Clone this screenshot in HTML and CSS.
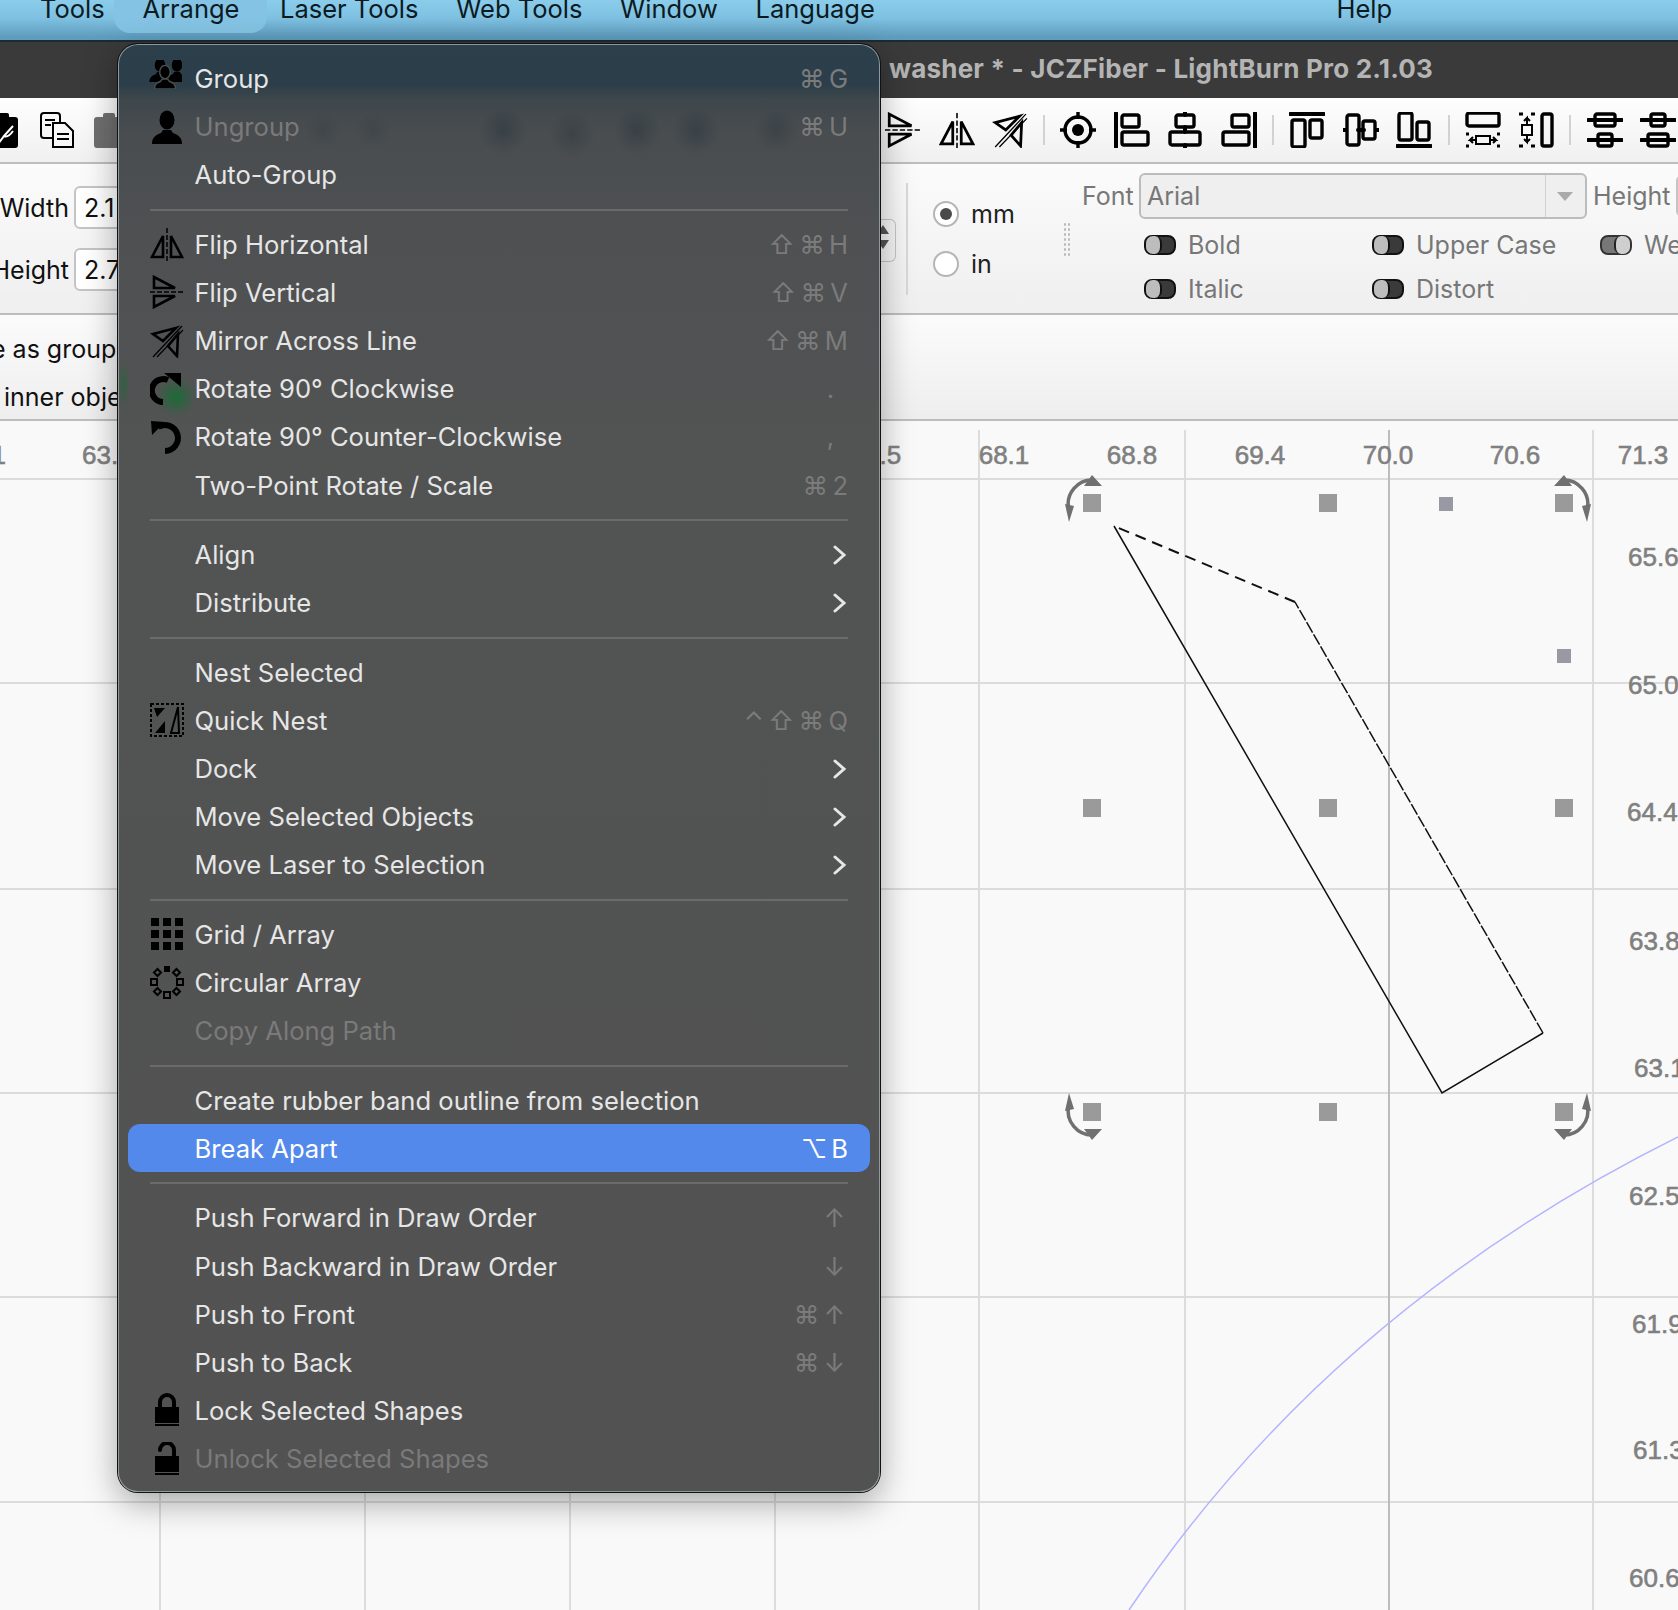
FILE: index.html
```html
<!DOCTYPE html>
<html lang="en">
<head>
    <meta charset="UTF-8">
    <title>washer * - JCZFiber - LightBurn Pro 2.1.03</title>
    <link rel="stylesheet" href="styles.css">
</head>
<body>
    <!-- shared icons -->
    <svg class="defs" width="0" height="0">
        <symbol id="person" viewBox="0 0 34 34"><ellipse cx="17" cy="10" rx="7.5" ry="9.5"/><path d="M2 34c0-7 4-9 9-11l2-3h8l2 3c5 2 9 4 9 11z"/></symbol>
        <symbol id="flip" viewBox="0 0 34 34"><path class="ln-flip" d="M13 9v21H2zM21 9v21h11z"/><path class="ln-dash" d="M17 1v33"/></symbol>
        <symbol id="mirror" viewBox="0 0 34 34"><path class="ln-flip" d="M3 10l23-6-13 13zM28 10l-1 22-9-10z"/><path class="ln1" d="M3 33L32 2M7 33L33 6"/></symbol>
        <symbol id="chev" viewBox="0 0 14 20"><path class="chev-line" d="M2 2l9 8-9 8"/></symbol>
        <symbol id="t-left" viewBox="0 0 36 36"><path class="ln4" d="M2 1v34"/><rect class="ln3" x="8" y="3" width="17" height="12" rx="2"/><rect class="ln3" x="8" y="20" width="26" height="13" rx="2"/></symbol>
        <symbol id="t-center" viewBox="0 0 36 36"><path class="ln4" d="M18 0v3M18 15v5M18 33v3"/><rect class="ln3" x="9" y="3" width="18" height="12" rx="2"/><rect class="ln3" x="3" y="20" width="30" height="13" rx="2"/></symbol>
        <symbol id="t-top" viewBox="0 0 36 36"><path class="ln4" d="M1 2h34"/><rect class="ln3" x="3" y="8" width="13" height="27" rx="2"/><rect class="ln3" x="21" y="8" width="12" height="18" rx="2"/></symbol>
        <symbol id="t-mid" viewBox="0 0 36 36"><path class="ln4" d="M0 18h3M15 18h6M33 18h3"/><rect class="ln3" x="4" y="3" width="12" height="30" rx="2"/><rect class="ln3" x="20" y="9" width="12" height="18" rx="2"/></symbol>
        <symbol id="t-stack" viewBox="0 0 36 36"><path class="ln4" d="M1 8h34M1 28h34"/><rect class="ln3" x="8" y="2" width="20" height="12" rx="2"/><rect class="ln3" x="11" y="22" width="14" height="12" rx="2"/></symbol>
    </svg>

    <div class="menubar">
        <span class="mb-item mb-tools">Tools</span>
        <span class="mb-item mb-active">Arrange</span>
        <span class="mb-item">Laser Tools</span>
        <span class="mb-item">Web Tools</span>
        <span class="mb-item">Window</span>
        <span class="mb-item">Language</span>
        <span class="mb-item mb-help">Help</span>
    </div>

    <div class="titlebar">washer * - JCZFiber - LightBurn Pro 2.1.03</div>

    <div class="toolbar">
        <div class="tb-group tb-left">
            <svg class="tb-icon" viewBox="0 0 36 36"><rect x="2" y="5" width="30" height="31" rx="3"/><rect x="11" y="1" width="12" height="8" rx="2"/><path class="ln-w" d="M27 14L18 24Q22 26 27 19M18 24L12 32"/><circle class="ln-w" cx="9" cy="30" r="3"/></svg>
            <svg class="tb-icon" viewBox="0 0 36 36"><rect class="ln2" x="2" y="1" width="19" height="25" rx="3"/><path class="ln2 fill-w" d="M14 11h12l8 8v16H14z"/><path class="ln2" d="M18 22h12M18 27h12M6 8h10M6 13h6"/></svg>
            <svg class="tb-icon tb-dim" viewBox="0 0 36 36"><rect x="2" y="5" width="30" height="31" rx="3"/><rect x="11" y="1" width="12" height="8" rx="2"/></svg>
        </div>
        <div class="tb-group tb-right">
            <svg class="tb-icon flip-v"><use href="#flip"/></svg>
            <svg class="tb-icon"><use href="#flip"/></svg>
            <svg class="tb-icon"><use href="#mirror"/></svg>
            <i class="tb-sep"></i>
            <svg class="tb-icon" viewBox="0 0 36 36"><circle class="ln3" cx="18" cy="18" r="13"/><circle cx="18" cy="18" r="6"/><path class="ln3" d="M18 0v7M18 29v7M0 18h7M29 18h7"/></svg>
            <svg class="tb-icon"><use href="#t-left"/></svg>
            <svg class="tb-icon"><use href="#t-center"/></svg>
            <svg class="tb-icon flip-h"><use href="#t-left"/></svg>
            <i class="tb-sep"></i>
            <svg class="tb-icon"><use href="#t-top"/></svg>
            <svg class="tb-icon"><use href="#t-mid"/></svg>
            <svg class="tb-icon flip-y"><use href="#t-top"/></svg>
            <i class="tb-sep"></i>
            <svg class="tb-icon" viewBox="0 0 36 36"><rect class="ln3" x="2" y="1" width="32" height="13" rx="2"/><path class="dots" d="M1 22h3M32 22h3M1 34h3M32 34h3"/><rect class="ln2" x="11" y="24" width="14" height="8"/><path class="ln2" d="M10 28H5l3-3M5 28l3 3M26 28h5l-3-3M31 28l-3 3"/></svg>
            <svg class="tb-icon" viewBox="0 0 36 36"><rect class="ln3" x="24" y="2" width="10" height="32" rx="2"/><path class="dots" d="M1 2h4M13 2h4M1 34h4M13 34h4"/><rect class="ln2" x="4" y="13" width="10" height="10"/><path class="ln2" d="M9 12V6L6 9M9 6l3 3M9 24v6l-3-3M9 30l3-3"/></svg>
            <i class="tb-sep"></i>
            <svg class="tb-icon"><use href="#t-stack"/></svg>
            <svg class="tb-icon flip-y"><use href="#t-stack"/></svg>
        </div>
    </div>

    <div class="props">
        <div class="size-col">
            <div class="size-row"><span class="size-label">Width</span><span class="size-input">2.1</span></div>
            <div class="size-row"><span class="size-label">Height</span><span class="size-input">2.7</span></div>
        </div>
        <div class="spinner"><i class="sp-up"></i><i class="sp-down"></i></div>
        <div class="units">
            <label class="radio-row"><i class="radio radio-on"></i>mm</label>
            <label class="radio-row"><i class="radio"></i>in</label>
        </div>
        <div class="grip"></div>
        <div class="font-block">
            <div class="font-row">
                <span class="font-label">Font</span>
                <div class="combo"><span class="combo-text">Arial</span><span class="combo-arrow"></span></div>
                <span class="font-height">Height</span>
                <span class="height-input"></span>
            </div>
            <div class="toggles">
                <span class="toggle-item"><i class="toggle"></i>Bold</span>
                <span class="toggle-item"><i class="toggle"></i>Upper Case</span>
                <span class="toggle-item"><i class="toggle toggle-on"></i>We</span>
                <span class="toggle-item"><i class="toggle"></i>Italic</span>
                <span class="toggle-item"><i class="toggle"></i>Distort</span>
            </div>
        </div>
    </div>

    <div class="options">
        <div class="opt-line opt-group">e as group</div>
        <div class="opt-line opt-inner">inner obje</div>
    </div>

    <!-- canvas, coordinates in page pixels -->
    <svg class="canvas" viewBox="0 421 1678 1189">
        <defs>
            <g id="rot">
                <path class="rot-arc" d="M2 -23A24 24 0 0 0 -23 7"/>
                <path class="rot-head" d="M0 -28L10 -17H-8zM-27 1L-18 3L-23 19z"/>
            </g>
        </defs>
        <path class="grid" d="M0 479H1678M0 683H1678M0 889H1678M0 1093H1678M0 1297H1678M0 1502H1678M160 430V1610M365 430V1610M570 430V1610M775 430V1610M979 430V1610M1185 430V1610M1593 430V1610"/>
        <path class="grid-dark" d="M1389 430V1610"/>

        <text class="rule" text-anchor="end" x="6" y="464">1</text>
        <text class="rule" x="82" y="464">63.7</text>
        <text class="rule" text-anchor="middle" x="876" y="464">67.5</text>
        <text class="rule" text-anchor="middle" x="1004" y="464">68.1</text>
        <text class="rule" text-anchor="middle" x="1132" y="464">68.8</text>
        <text class="rule" text-anchor="middle" x="1260" y="464">69.4</text>
        <text class="rule" text-anchor="middle" x="1388" y="464">70.0</text>
        <text class="rule" text-anchor="middle" x="1515" y="464">70.6</text>
        <text class="rule" text-anchor="middle" x="1643" y="464">71.3</text>
        <text class="rule" x="1628" y="566">65.6</text>
        <text class="rule" x="1628" y="694">65.0</text>
        <text class="rule" x="1627" y="821">64.4</text>
        <text class="rule" x="1629" y="950">63.8</text>
        <text class="rule" x="1634" y="1077">63.1</text>
        <text class="rule" x="1629" y="1205">62.5</text>
        <text class="rule" x="1632" y="1333">61.9</text>
        <text class="rule" x="1633" y="1459">61.3</text>
        <text class="rule" x="1629" y="1587">60.6</text>

        <path class="curve" d="M1129 1610Q1330 1310 1678 1137"/>
        <path class="shape" d="M1114 526L1442 1093L1543 1033"/>
        <path class="shape shape-fine" d="M1543 1033L1295 602"/>
        <path class="shape shape-dash" d="M1295 602L1114 526"/>

        <rect class="handle" x="1083" y="494" width="18" height="18"/>
        <rect class="handle" x="1319" y="494" width="18" height="18"/>
        <rect class="handle" x="1555" y="494" width="18" height="18"/>
        <rect class="handle-sm" x="1439" y="497" width="14" height="14"/>
        <rect class="handle-sm" x="1557" y="649" width="14" height="14"/>
        <rect class="handle" x="1083" y="799" width="18" height="18"/>
        <rect class="handle" x="1319" y="799" width="18" height="18"/>
        <rect class="handle" x="1555" y="799" width="18" height="18"/>
        <rect class="handle" x="1083" y="1103" width="18" height="18"/>
        <rect class="handle" x="1319" y="1103" width="18" height="18"/>
        <rect class="handle" x="1555" y="1103" width="18" height="18"/>
        <use href="#rot" transform="translate(1092 503)"/>
        <use href="#rot" transform="translate(1564 503) scale(-1 1)"/>
        <use href="#rot" transform="translate(1092 1112) scale(1 -1)"/>
        <use href="#rot" transform="translate(1564 1112) scale(-1 -1)"/>
    </svg>

    <!-- Arrange menu -->
    <div class="menu">
        <div class="row"><svg class="mi mi-group" viewBox="0 0 34 34"><use href="#person" x="-7" y="-7" width="24" height="24" transform="translate(7 5)"/><use href="#person" x="-7" y="-7" width="24" height="24" transform="translate(24 5)"/><use class="person-front" href="#person" x="5" y="5" width="24" height="24"/></svg><span class="label">Group</span><span class="keys">⌘ G</span></div>
        <div class="row off"><svg class="mi"><use href="#person"/></svg><span class="label">Ungroup</span><span class="keys">⌘ U</span></div>
        <div class="row"><span class="label">Auto-Group</span></div>
        <div class="sep"></div>
        <div class="row"><svg class="mi"><use href="#flip"/></svg><span class="label">Flip Horizontal</span><span class="keys">⇧ ⌘ H</span></div>
        <div class="row"><svg class="mi flip-v"><use href="#flip"/></svg><span class="label">Flip Vertical</span><span class="keys">⇧ ⌘ V</span></div>
        <div class="row"><svg class="mi"><use href="#mirror"/></svg><span class="label">Mirror Across Line</span><span class="keys">⇧ ⌘ M</span></div>
        <div class="row"><svg class="mi" viewBox="0 0 34 34"><path class="ln5" d="M18 8A11.500 11.500 0 1 0 13 30"/><path d="M14 1h17v14z"/></svg><span class="label">Rotate 90° Clockwise</span><span class="keys keys-punct">.</span></div>
        <div class="row"><svg class="mi" viewBox="0 0 34 34"><path class="ln5" d="M8 7A13 13 0 1 1 15 31"/><path d="M1 1l14 1L2 15z"/></svg><span class="label">Rotate 90° Counter-Clockwise</span><span class="keys keys-punct">,</span></div>
        <div class="row"><span class="label">Two-Point Rotate / Scale</span><span class="keys">⌘ 2</span></div>
        <div class="sep"></div>
        <div class="row"><span class="label">Align</span><svg class="chev"><use href="#chev"/></svg></div>
        <div class="row"><span class="label">Distribute</span><svg class="chev"><use href="#chev"/></svg></div>
        <div class="sep"></div>
        <div class="row"><span class="label">Nest Selected</span></div>
        <div class="row"><svg class="mi" viewBox="0 0 34 34"><rect class="nest-box" x="1" y="1" width="32" height="32"/><path d="M4 5h11l-8 9zM15 18v12H5z"/><path class="ln2" d="M28 4l-7 26h8z"/></svg><span class="label">Quick Nest</span><span class="keys">⌃ ⇧ ⌘ Q</span></div>
        <div class="row"><span class="label">Dock</span><svg class="chev"><use href="#chev"/></svg></div>
        <div class="row"><span class="label">Move Selected Objects</span><svg class="chev"><use href="#chev"/></svg></div>
        <div class="row"><span class="label">Move Laser to Selection</span><svg class="chev"><use href="#chev"/></svg></div>
        <div class="sep"></div>
        <div class="row"><svg class="mi" viewBox="0 0 34 34"><path d="M1 1h8v8H1zM13 1h8v8h-8zM25 1h8v8h-8zM1 13h8v8H1zM13 13h8v8h-8zM25 13h8v8h-8zM1 25h8v8H1zM13 25h8v8h-8zM25 25h8v8h-8z"/></svg><span class="label">Grid / Array</span></div>
        <div class="row"><svg class="mi" viewBox="0 0 34 34"><rect x="14" y="1" width="6" height="6"/><g class="ln2"><rect x="14" y="27" width="6" height="6"/><rect x="1" y="14" width="6" height="6"/><rect x="27" y="14" width="6" height="6"/><rect x="5" y="5" width="5" height="5" transform="rotate(45 7.500 7.500)"/><rect x="24" y="5" width="5" height="5" transform="rotate(45 26.500 7.500)"/><rect x="5" y="24" width="5" height="5" transform="rotate(45 7.500 26.500)"/><rect x="24" y="24" width="5" height="5" transform="rotate(45 26.500 26.500)"/></g></svg><span class="label">Circular Array</span></div>
        <div class="row off"><span class="label">Copy Along Path</span></div>
        <div class="sep"></div>
        <div class="row"><span class="label">Create rubber band outline from selection</span></div>
        <div class="row selected"><span class="label">Break Apart</span><span class="keys">⌥ B</span></div>
        <div class="sep"></div>
        <div class="row"><span class="label">Push Forward in Draw Order</span><span class="keys keys-arrow">↑</span></div>
        <div class="row"><span class="label">Push Backward in Draw Order</span><span class="keys keys-arrow">↓</span></div>
        <div class="row"><span class="label">Push to Front</span><span class="keys keys-arrow">⌘ ↑</span></div>
        <div class="row"><span class="label">Push to Back</span><span class="keys keys-arrow">⌘ ↓</span></div>
        <div class="row"><svg class="mi" viewBox="0 0 34 34"><path class="ln4" d="M10 15V9a7 7 0 0 1 14 0v6"/><path d="M5 14h24v16H5zM5 31h24v2H5z"/></svg><span class="label">Lock Selected Shapes</span></div>
        <div class="row off"><svg class="mi" viewBox="0 0 34 34"><path class="ln4" d="M10 8a7 7 0 0 1 14 0v7"/><path d="M5 14h24v16H5zM5 31h24v2H5z"/></svg><span class="label">Unlock Selected Shapes</span></div>
    </div>
</body>
</html>
```

FILE: styles.css
```css
* {
    box-sizing: border-box;
}

html, body {
    margin: 0;
    height: 1610px;
    overflow: hidden;
}

body {
    position: relative;
    font-family: "Inter", "Liberation Sans", "DejaVu Sans", sans-serif;
    font-size: 25px;
    color: #111;
    background: #f9f9f9;
    display: flex;
    flex-direction: column;
}

.defs {
    position: absolute;
}

/* svg line helpers */
.ln1, .ln2, .ln3, .ln4, .ln5, .ln-w, .ln-flip, .ln-dash, .dots, .chev-line, .nest-box {
    fill: none;
    stroke: #000;
}
.ln1 { stroke-width: 1.2; }
.ln2 { stroke-width: 2; fill: none; stroke: #000; }
.ln3 { stroke-width: 3.4; }
.ln4 { stroke-width: 4; stroke-linecap: round; }
.ln5 { stroke-width: 6; }
.ln-w { stroke: #fff; stroke-width: 2; }
.ln-flip { stroke-width: 2.600; }
.ln-dash { stroke-width: 1.500; stroke-dasharray: 5 2; }
.dots { stroke-width: 3; }
.nest-box { stroke-width: 2; stroke-dasharray: 3 2; }
.fill-w { fill: #f8f8f8; }
.flip-v { transform: rotate(90deg); }
.flip-h { transform: scaleX(-1); }
.flip-y { transform: scaleY(-1); }

/* top menu bar */
.menubar {
    flex: none;
    height: 42px;
    display: flex;
    padding-left: 12px;
    font-size: 25.500px;
    line-height: 18px;
    background: linear-gradient(#8accea, #7fc1e2 45%, #5f9dbe 92%);
    border-bottom: 2px solid #1b2a33;
    overflow: hidden;
}

.mb-item {
    height: 33px;
    padding: 0 28px;
    margin-right: -18.300px;
    border-radius: 0 0 16px 16px;
    color: #0c1a22;
}

.mb-active {
    background: #84c3e3;
    margin-right: -15.500px;
}

.mb-help {
    margin-left: 424px;
}

.titlebar {
    flex: none;
    height: 56px;
    padding-left: 889px;
    line-height: 54px;
    font-size: 26px;
    font-weight: 700;
    letter-spacing: 0.2px;
    color: #b4b4b4;
    background: #3a3a3a;
    white-space: nowrap;
}

/* icon toolbar */
.toolbar {
    flex: none;
    height: 66px;
    display: flex;
    align-items: center;
    padding-bottom: 1px;
    background: linear-gradient(#fefefe, #f0f0f0);
    border-bottom: 2px solid #bdbdbd;
    overflow: hidden;
}

.tb-group {
    display: flex;
    align-items: center;
    gap: 17.500px;
    flex: none;
}

.tb-left {
    margin-left: -14px;
    gap: 17px;
}

.tb-right {
    margin-left: 757px;
}

.tb-icon {
    width: 36px;
    height: 36px;
    flex: none;
}

.tb-dim {
    opacity: 0.55;
}

.tb-sep {
    width: 2px;
    height: 30px;
    margin: 0 -2.300px;
    flex: none;
    background: #d2d2d2;
}

/* properties panel */
.props {
    flex: none;
    height: 151px;
    display: flex;
    background: linear-gradient(#fbfbfb, #efefef);
    border-bottom: 2px solid #bdbdbd;
    overflow: hidden;
}

.size-col {
    flex: none;
    width: 200px;
    padding-top: 22px;
    display: flex;
    flex-direction: column;
    gap: 19px;
}

.size-row {
    display: flex;
    align-items: center;
    height: 43px;
}

.size-label {
    width: 69px;
    display: flex;
    justify-content: flex-end;
    white-space: nowrap;
}

.size-input {
    width: 110px;
    height: 43px;
    margin-left: 5px;
    padding-left: 8px;
    line-height: 41px;
    background: #fff;
    border: 2px solid #c4c4c4;
    border-radius: 6px;
}

.spinner {
    flex: none;
    width: 16px;
    height: 43px;
    margin: 55px 0 0 680px;
    border: 1px solid #c4c4c4;
    border-left: 0;
    border-radius: 0 6px 6px 0;
}

.sp-up, .sp-down {
    display: block;
    width: 0;
    margin: 5px 0 6px -3px;
    border-left: 6px solid transparent;
    border-right: 6px solid transparent;
}
.sp-up { border-bottom: 9px solid #555; }
.sp-down { border-top: 9px solid #555; }

.units {
    flex: none;
    width: 135px;
    margin: 19px 0 18px 10px;
    padding: 17px 0 0 25px;
    border-left: 2px solid #d8d8d8;
    display: flex;
    flex-direction: column;
    gap: 22px;
}

.radio-row {
    display: flex;
    align-items: center;
    height: 28px;
    gap: 12px;
    color: #222;
}

.radio {
    width: 26px;
    height: 26px;
    flex: none;
    display: flex;
    align-items: center;
    justify-content: center;
    border: 2px solid #b5b5b5;
    border-radius: 50%;
    background: #fff;
}

.radio-on::after {
    content: "";
    width: 12px;
    height: 12px;
    border-radius: 50%;
    background: #4a4a4a;
}

.grip {
    flex: none;
    width: 8px;
    height: 34px;
    margin: 58px 0 0 22px;
    background-image: radial-gradient(circle, #bbb 1px, transparent 1.500px);
    background-size: 4px 5px;
}

.font-block {
    margin-left: 11px;
    padding-top: 9px;
    flex: none;
    color: #777;
}

.font-row {
    display: flex;
    align-items: center;
    height: 46px;
}

.font-label {
    width: 57px;
}

.combo {
    width: 448px;
    height: 46px;
    display: flex;
    align-items: center;
    justify-content: space-between;
    background: #efefef;
    border: 2px solid #bcbcbc;
    border-radius: 6px;
}

.combo-text {
    padding-left: 6px;
}

.combo-arrow {
    width: 40px;
    height: 42px;
    border-left: 1px solid #cfcfcf;
    position: relative;
}

.combo-arrow::after {
    content: "";
    position: absolute;
    left: 11px;
    top: 17px;
    border-left: 8px solid transparent;
    border-right: 8px solid transparent;
    border-top: 9px solid #aaa;
}

.font-height {
    margin-left: 6px;
    width: 83px;
    flex: none;
}

.height-input {
    width: 20px;
    height: 42px;
    flex: none;
    border: 2px solid #c4c4c4;
    border-radius: 6px;
    background: #fff;
}

.toggles {
    margin: 4px 0 0 62px;
    display: grid;
    grid-template-columns: 228px 228px 228px;
    grid-auto-rows: 44px;
}

.toggle-item {
    display: flex;
    align-items: center;
    gap: 12px;
}

.toggle {
    width: 32px;
    height: 20px;
    flex: none;
    display: flex;
    background: #3a3a3a;
    border: 2px solid #111;
    border-radius: 8px;
}

.toggle::before {
    content: "";
    width: 14px;
    margin: -1px 0;
    background: #bdbdbd;
    border-right: 2px solid #111;
    border-radius: 7px;
}

.toggle-on {
    background: #777;
    justify-content: flex-end;
    border-color: #333;
}

.toggle-on::before {
    background: #cfcfcf;
    border-right: 0;
    border-left: 2px solid #222;
}

/* second options bar */
.options {
    flex: none;
    height: 106px;
    padding-top: 10px;
    background: linear-gradient(#fbfbfb, #eeeeee);
    border-bottom: 2px solid #bdbdbd;
}

.opt-line {
    height: 48px;
    line-height: 48px;
    white-space: nowrap;
}

.opt-group {
    margin-left: -9px;
}

.opt-inner {
    margin-left: 4px;
}

/* canvas */
.canvas {
    flex: none;
    display: block;
    width: 1678px;
    height: 1189px;
}

.grid {
    fill: none;
    stroke: #dcdcdc;
    stroke-width: 2;
}

.grid-dark {
    fill: none;
    stroke: #bcbcbc;
    stroke-width: 2;
}

.rule {
    font-family: "Liberation Sans", sans-serif;
    font-size: 26px;
    fill: #808080;
    stroke: #808080;
    stroke-width: 0.6;
}

.curve {
    fill: none;
    stroke: #b4b4ff;
    stroke-width: 1.500;
}

.shape {
    fill: none;
    stroke: #111;
    stroke-width: 1.500;
}

.shape-fine {
    stroke-dasharray: 12 2;
}

.shape-dash {
    stroke-width: 2;
    stroke-dasharray: 11 7;
}

.handle {
    fill: #9a9a9a;
}

.handle-sm {
    fill: #9899a3;
}

.rot-arc {
    fill: none;
    stroke: #707070;
    stroke-width: 3.500;
}

.rot-head {
    fill: #707070;
}

/* Arrange dropdown, lies over the page */
.menu {
    position: absolute;
    left: 118px;
    top: 44px;
    width: 762px;
    height: 1448px;
    padding: 10.500px 10px 0;
    border-radius: 20px;
    font-size: 25.600px;
    box-shadow: inset 0 0 0 1px #8f9a9f, 0 0 0 1px #111, 0 10px 34px rgba(0, 0, 0, 0.35);
    background:
        radial-gradient(circle 24px at 385px 87px, rgba(45, 55, 62, 0.55), transparent),
        radial-gradient(circle 24px at 454px 90px, rgba(45, 55, 62, 0.45), transparent),
        radial-gradient(circle 24px at 519px 87px, rgba(45, 55, 62, 0.55), transparent),
        radial-gradient(circle 24px at 578px 87px, rgba(45, 55, 62, 0.55), transparent),
        radial-gradient(circle 22px at 658px 87px, rgba(45, 55, 62, 0.45), transparent),
        radial-gradient(circle 18px at 205px 87px, rgba(45, 55, 62, 0.3), transparent),
        radial-gradient(circle 18px at 255px 87px, rgba(45, 55, 62, 0.3), transparent),
        radial-gradient(circle 20px at 58px 353px, rgba(20, 110, 50, 0.85), transparent),
        radial-gradient(ellipse 6px 24px at 6px 340px, rgba(20, 110, 50, 0.5), transparent),
        linear-gradient(#2c404b 0, #2b3e49 40px, #3f474c 56px, #494d50 90px, #4e5052 180px, #525353 400px, #525252);
}

.row {
    height: 48.150px;
    padding: 0 22px;
    display: flex;
    align-items: center;
    position: relative;
    color: #e6e6e6;
    white-space: nowrap;
}

.label {
    margin-left: 44.500px;
    flex: 1;
}

.mi {
    position: absolute;
    left: 22px;
    top: 7px;
    width: 34px;
    height: 34px;
}

.mi-group {
    left: 20px;
    top: 5px;
}

.person-front {
    stroke: #4a4f52;
    stroke-width: 2;
}

.keys {
    color: #7b7b7b;
    font-family: "Inter", "DejaVu Sans", sans-serif;
    word-spacing: -3px;
}

.keys-punct {
    margin-right: 14px;
}

.keys-arrow {
    margin-right: 3px;
}

.chev {
    width: 14px;
    height: 20px;
    margin-right: 1px;
}

.chev-line {
    stroke: #e6e6e6;
    stroke-width: 3;
    stroke-linecap: round;
}

.off .label {
    color: #7a7a7a;
}

.selected {
    background: #5489ec;
    border-radius: 12px;
    color: #fff;
}

.selected .keys {
    color: #fff;
}

.sep {
    height: 21.400px;
    margin: 0 22px;
    position: relative;
}

.sep::after {
    content: "";
    position: absolute;
    left: 0;
    right: 0;
    top: 10px;
    height: 2px;
    background: #6b6b6b;
}
```
